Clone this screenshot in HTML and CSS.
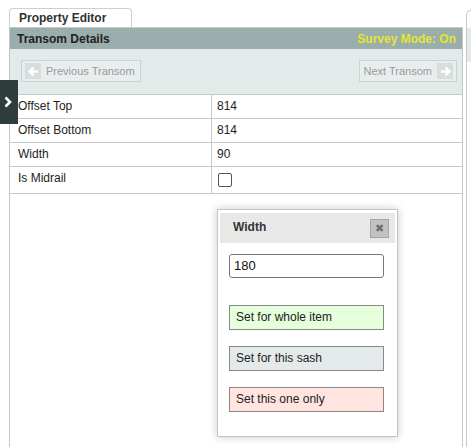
FILE: index.html
```html
<!DOCTYPE html>
<html>
<head>
<meta charset="utf-8">
<link rel="stylesheet" href="styles.css">
</head>
<body>
<div class="page">
  <div class="editor">
    <div class="tab">Property Editor</div>
    <div class="panel">
      <div class="header">
        <span class="title">Transom Details</span>
        <span class="survey">Survey Mode: On</span>
      </div>
      <div class="toolbar">
        <button class="nav prev"><span class="ico"><svg width="15" height="15" viewBox="0 0 15 15"><path d="M12 7.5H4M7.5 3.5L3.5 7.5L7.5 11.5" stroke="#fff" stroke-width="2.4" fill="none"/></svg></span>Previous Transom</button>
        <button class="nav next">Next Transom<span class="ico"><svg width="15" height="15" viewBox="0 0 15 15"><path d="M3 7.5H11M7.5 3.5L11.5 7.5L7.5 11.5" stroke="#fff" stroke-width="2.4" fill="none"/></svg></span></button>
      </div>
      <div class="table">
        <div class="row"><div class="label">Offset Top</div><div class="value">814</div></div>
        <div class="row"><div class="label">Offset Bottom</div><div class="value">814</div></div>
        <div class="row"><div class="label">Width</div><div class="value">90</div></div>
        <div class="row tall"><div class="label">Is Midrail</div><div class="value"><span class="check"></span></div></div>
      </div>
    </div>
  </div>
  <div class="side"><div class="side-band"></div></div>
</div>

<div class="toggle"><svg width="10" height="12" viewBox="0 0 10 12"><path d="M2.5 1.5L7 6L2.5 10.5" stroke="#fff" stroke-width="2.6" fill="none"/></svg></div>

<div class="popup">
  <div class="pop-head">
    <span class="pop-title">Width</span>
    <span class="close">✖</span>
  </div>
  <div class="pop-body">
    <div class="input">180</div>
    <div class="opt green">Set for whole item</div>
    <div class="opt grey">Set for this sash</div>
    <div class="opt red">Set this one only</div>
  </div>
</div>
</body>
</html>
```

FILE: styles.css
```css
html, body {
  margin: 0;
  padding: 0;
  background: #fff;
  font-family: "Liberation Sans", Arial, sans-serif;
  font-size: 12px;
  color: #222;
}
.page {
  display: flex;
  padding-left: 9px;
  padding-top: 8px;
  height: 439px;
  gap: 3px;
}
.editor {
  width: 454px;
  display: flex;
  flex-direction: column;
}
.tab {
  width: 123px;
  height: 19px;
  box-sizing: border-box;
  border: 1px solid #cfcfcf;
  border-bottom: none;
  border-radius: 4px 4px 0 0;
  padding-left: 9px;
  line-height: 18px;
  font-weight: bold;
  color: #333;
  background: #fff;
}
.panel {
  flex: 1;
  border-left: 1px solid #c8c8c8;
  border-right: 1px solid #c8c8c8;
  border-top: 1px solid #c8c8c8;
}
.header {
  height: 21px;
  background: #9aaeae;
  display: flex;
  justify-content: space-between;
  align-items: center;
  padding: 0 6px 0 7px;
  font-weight: bold;
}
.title { color: #222; }
.survey { color: #e6e62e; }
.toolbar {
  height: 46px;
  background: #e2eaea;
  border-bottom: 1px solid #c8c8c8;
  display: flex;
  justify-content: space-between;
  align-items: center;
  padding: 0 5px 0 11px;
  box-sizing: border-box;
}
.nav {
  height: 22px;
  border: 1px solid #cdd3d3;
  background: #e8eeee;
  color: #9a9a9a;
  font-family: "Liberation Sans", Arial, sans-serif;
  font-size: 11px;
  display: flex;
  align-items: center;
  gap: 5px;
  padding: 0 3px;
  margin-top: -1px;
  white-space: nowrap;
}
.prev { padding-right: 5px; }
.next { padding-left: 4px; }
.ico {
  width: 16px;
  height: 16px;
  background: #d8dede;
  display: flex;
  align-items: center;
  justify-content: center;
}
.row {
  display: flex;
  height: 24px;
  border-bottom: 1px solid #c8c8c8;
  box-sizing: border-box;
}
.row.tall { height: 27px; }
.label {
  width: 202px;
  box-sizing: border-box;
  padding-left: 8px;
  border-right: 1px solid #c8c8c8;
  line-height: 22px;
}
.value {
  padding-left: 5px;
  line-height: 22px;
}
.check {
  display: inline-block;
  width: 12px;
  height: 12px;
  border: 1px solid #555;
  border-radius: 2px;
  margin-top: 6px;
  margin-left: 1px;
  vertical-align: top;
}
.side {
  flex: 1;
  margin-top: 2px;
  border-left: 1px solid #c8c8c8;
  border-top: 1px solid #c8c8c8;
  border-radius: 5px 0 0 0;
}
.side-band {
  margin-top: 17px;
  height: 34px;
  background: #e2eaea;
}
.toggle {
  position: absolute;
  left: 0;
  top: 80px;
  width: 18px;
  height: 44px;
  background: #2e3c3c;
  display: flex;
  justify-content: center;
  padding-top: 16px;
  box-sizing: border-box;
}
.toggle svg { margin-left: -2px; }
.popup {
  position: absolute;
  left: 217px;
  top: 209px;
  width: 181px;
  height: 228px;
  box-sizing: border-box;
  background: #fff;
  border: 1px solid #c4c4c4;
  box-shadow: 0 0 8px rgba(0,0,0,0.22);
  padding: 3px 2px;
}
.pop-head {
  height: 30px;
  background: #e8e8e8;
  display: flex;
  align-items: center;
  justify-content: space-between;
  padding: 0 6px 0 13px;
}
.pop-title {
  font-weight: bold;
  color: #333;
  margin-top: -2px;
}
.close {
  width: 19px;
  height: 19px;
  box-sizing: border-box;
  background: #c2c2c2;
  border: 1px solid #a5a5a5;
  color: #6e6e6e;
  font-size: 11px;
  display: flex;
  align-items: center;
  justify-content: center;
}
.pop-body {
  padding: 11px 11px 0 9px;
  display: flex;
  flex-direction: column;
}
.input {
  height: 24px;
  box-sizing: border-box;
  border: 1px solid #777;
  border-radius: 3px;
  padding-left: 4px;
  line-height: 22px;
  color: #111;
  font-size: 13px;
  margin-bottom: 27px;
}
.opt {
  height: 25px;
  box-sizing: border-box;
  border: 1px solid #888;
  padding-left: 6px;
  line-height: 23px;
  color: #222;
  margin-bottom: 16px;
}
.green { background: #e6ffdc; }
.grey { background: #e4eaea; }
.red { background: #ffe4e0; }
```
